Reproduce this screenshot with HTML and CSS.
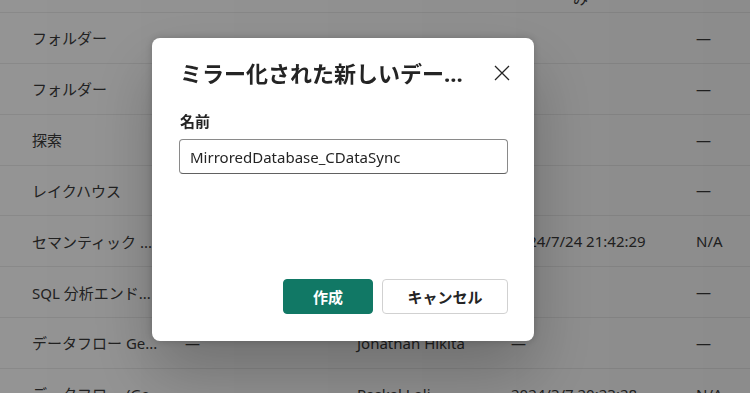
FILE: index.html
```html
<!DOCTYPE html>
<html lang="ja">
<head>
    <meta charset="UTF-8">
    <meta name="viewport" content="width=device-width, initial-scale=1.0">
    <title>ミラー化された新しいデータベース</title>
    <link rel="stylesheet" href="styles.css">
</head>

<body>
    <div class="list">
        <div class="row head">
            <div class="cell"></div>
            <div class="cell"></div>
            <div class="cell"></div>
            <div class="cell head-wrap">み</div>
            <div class="cell"></div>
        </div>
        <div class="row">
            <div class="cell">フォルダー</div>
            <div class="cell"></div>
            <div class="cell"></div>
            <div class="cell"></div>
            <div class="cell">—</div>
        </div>
        <div class="row">
            <div class="cell">フォルダー</div>
            <div class="cell"></div>
            <div class="cell"></div>
            <div class="cell"></div>
            <div class="cell">—</div>
        </div>
        <div class="row">
            <div class="cell">探索</div>
            <div class="cell"></div>
            <div class="cell"></div>
            <div class="cell"></div>
            <div class="cell">—</div>
        </div>
        <div class="row">
            <div class="cell">レイクハウス</div>
            <div class="cell"></div>
            <div class="cell"></div>
            <div class="cell"></div>
            <div class="cell">—</div>
        </div>
        <div class="row">
            <div class="cell">セマンティック ...</div>
            <div class="cell"></div>
            <div class="cell"></div>
            <div class="cell">2024/7/24 21:42:29</div>
            <div class="cell">N/A</div>
        </div>
        <div class="row">
            <div class="cell">SQL 分析エンド...</div>
            <div class="cell"></div>
            <div class="cell"></div>
            <div class="cell"></div>
            <div class="cell">—</div>
        </div>
        <div class="row">
            <div class="cell">データフロー Ge...</div>
            <div class="cell">—</div>
            <div class="cell">Jonathan Hikita</div>
            <div class="cell">—</div>
            <div class="cell">—</div>
        </div>
        <div class="row">
            <div class="cell">データフロー (Ge...</div>
            <div class="cell"></div>
            <div class="cell">Paskal Loli</div>
            <div class="cell">2024/3/7 20:23:28</div>
            <div class="cell">N/A</div>
        </div>
    </div>

    <div class="overlay">
        <div class="dialog" role="dialog">
            <div class="dialog-title">
                <h2>ミラー化された新しいデータベース</h2>
                <button class="close-button" aria-label="閉じる">
                    <svg width="16" height="16" viewBox="0 0 16 16">
                        <path d="M1 1 L15 15 M15 1 L1 15" stroke="#242424" stroke-width="1.3" fill="none"/>
                    </svg>
                </button>
            </div>
            <div class="dialog-body">
                <label for="nameInput">名前</label>
                <input type="text" id="nameInput" class="input-field" value="MirroredDatabase_CDataSync">
            </div>
            <div class="dialog-actions">
                <button class="btn btn-primary">作成</button>
                <button class="btn btn-secondary">キャンセル</button>
            </div>
        </div>
    </div>
</body>
</html>
```

FILE: styles.css
```css
* {
    margin: 0;
    padding: 0;
    box-sizing: border-box;
}

body {
    font-family: 'Segoe UI', 'Noto Sans', 'Noto Sans CJK JP', sans-serif;
    background: #fff;
    color: #242424;
    overflow: hidden;
}

.row {
    display: grid;
    grid-template-columns: 153px 172px 154px 185px 1fr;
    align-items: center;
    height: 50.85px;
    padding-left: 32px;
    border-top: 1px solid #ececec;
    font-size: 15px;
    color: #3a3a3a;
    white-space: nowrap;
}

.row.head {
    height: 51px;
    margin-top: -39px;
    border-top: none;
    align-items: end;
}

.row.head .cell {
    line-height: 20px;
    margin-bottom: 4px;
}

.head-wrap {
    padding-left: 62px;
}

.overlay {
    position: fixed;
    inset: 0;
    background: linear-gradient(90deg, rgba(0, 0, 0, 0.42), rgba(0, 0, 0, 0.45));
    padding: 38px 0 0 152px;
}

.dialog {
    width: 382px;
    height: 303px;
    background: #fff;
    border-radius: 8px;
    box-shadow: 0 0 8px rgba(0, 0, 0, 0.2), 0 32px 64px rgba(0, 0, 0, 0.24);
    padding: 20px 26px 27px 27px;
    display: flex;
    flex-direction: column;
}

.dialog-title {
    display: flex;
    align-items: center;
    gap: 24px;
    height: 30px;
}

.dialog-title h2 {
    flex: 1;
    min-width: 0;
    font-size: 22px;
    font-weight: 700;
    line-height: 30px;
    color: #242424;
    white-space: nowrap;
    overflow: hidden;
    text-overflow: ellipsis;
    padding-left: 1px;
}

.close-button {
    background: none;
    border: none;
    width: 20px;
    height: 20px;
    display: flex;
    align-items: center;
    justify-content: center;
    margin-right: -4px;
    cursor: pointer;
}

.dialog-body {
    flex: 1;
    padding-top: 23px;
}

label {
    display: block;
    font-size: 15px;
    font-weight: 700;
    line-height: 20px;
    margin-bottom: 8px;
    padding-left: 1px;
    color: #242424;
}

.input-field {
    width: 100%;
    height: 35px;
    padding: 0 10px;
    font-family: inherit;
    font-size: 15px;
    color: #242424;
    border: 1px solid #8a8a8a;
    border-bottom-color: #616161;
    border-radius: 4px;
    outline: none;
}

.dialog-actions {
    display: flex;
    justify-content: flex-end;
    gap: 9px;
}

.btn {
    height: 35px;
    border-radius: 4px;
    font-family: inherit;
    font-size: 15px;
    font-weight: 700;
    cursor: pointer;
}

.btn-primary {
    width: 90px;
    background: #117865;
    border: 1px solid #117865;
    color: #fff;
}

.btn-secondary {
    width: 126px;
    background: #fff;
    border: 1px solid #d1d1d1;
    color: #242424;
}
```
